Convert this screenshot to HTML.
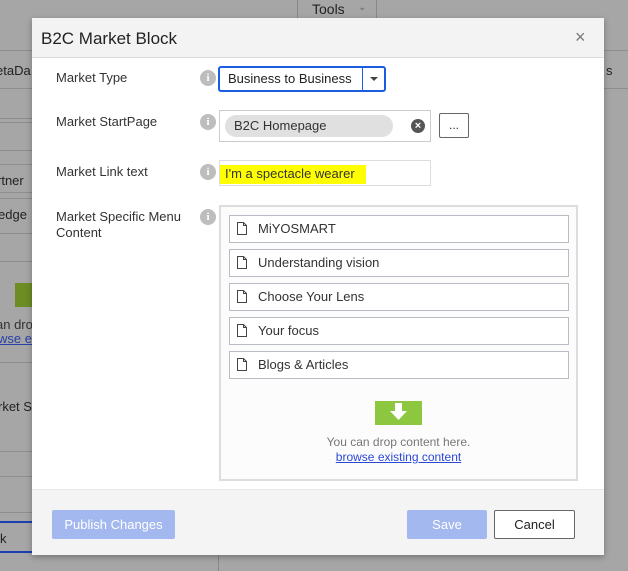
<!DOCTYPE html>
<html><head><style>
*{margin:0;padding:0;box-sizing:border-box}
body{width:628px;height:571px;background:#a6a6a6;position:relative;overflow:hidden;font-family:"Liberation Sans",sans-serif;font-size:13px;color:#333}
.a{position:absolute}
.ln{position:absolute;left:0;width:40px;height:1px;background:#8e8e8e}
.bt{color:#222;font-size:13px;position:absolute;left:0;white-space:nowrap}
.lbl{position:absolute;left:56px;font-size:13px;color:#333;line-height:16px}
.inf{position:absolute;left:200px;width:16px;height:16px;border-radius:50%;background:#bdbdbd;color:#fff;font-weight:bold;font-size:11px;text-align:center;line-height:16px;font-family:"Liberation Serif",serif}
.item{position:absolute;left:229px;width:340px;height:28px;border:1px solid #b9bcc4;background:#fff;font-size:13px;line-height:26px;padding-left:28px;color:#333}
.item svg{position:absolute;left:7px;top:6px}
</style></head><body>
<div class="a" style="left:297px;top:0;width:80px;height:18px;border-left:1px solid #888;border-right:1px solid #888"></div>
<div class="a" style="left:312px;top:1px;font-size:14px;color:#222">Tools</div>
<div class="a" style="left:358px;top:2px;font-size:10px;color:#666">&#8964;</div>
<div class="ln" style="top:50px;width:628px"></div>
<div class="ln" style="top:88px;width:628px"></div>
<div class="bt" style="top:63px;left:-4px">etaDa</div>
<div class="bt" style="top:63px;left:606px">s</div>
<div class="ln" style="top:118px"></div><div class="ln" style="top:122px"></div>
<div class="ln" style="top:150px"></div><div class="ln" style="top:164px"></div>
<div class="bt" style="top:173px;left:-3px">rtner</div>
<div class="ln" style="top:192px"></div><div class="ln" style="top:198px"></div>
<div class="bt" style="top:207px;left:-2px">edge</div>
<div class="ln" style="top:233px"></div><div class="ln" style="top:261px"></div>
<div class="a" style="left:15px;top:283px;width:20px;height:24px;background:#6d8c24"></div>
<div class="bt" style="top:317px;left:-4px;color:#333">an dro</div>
<div class="bt" style="top:331px;left:-2px;color:#2a3fa8;text-decoration:underline">wse exi</div>
<div class="ln" style="top:362px"></div>
<div class="bt" style="top:399px;left:-2px">rket S</div>
<div class="ln" style="top:451px"></div><div class="ln" style="top:476px"></div><div class="ln" style="top:512px"></div>
<div class="a" style="left:0;top:521px;width:40px;height:2px;background:#1d3fb0"></div>
<div class="bt" style="top:531px;left:0">k</div>
<div class="a" style="left:0;top:551px;width:40px;height:2px;background:#1d3fb0"></div>
<div class="a" style="left:218px;top:555px;width:1px;height:16px;background:#888"></div>

<div class="a" style="left:32px;top:18px;width:572px;height:537px;background:#fff;box-shadow:0 2px 6px rgba(0,0,0,.3)">
 <div class="a" style="left:0;top:0;width:572px;height:40px;background:#f3f3f3;border-bottom:1px solid #dcdcdc"></div>
 <div class="a" style="left:9px;top:11px;font-size:17px;color:#222">B2C Market Block</div>
 <div class="a" style="left:543px;top:9px;font-size:18px;color:#777">×</div>
</div>
<div class="lbl" style="top:70px">Market Type</div>
<div class="lbl" style="top:114px">Market StartPage</div>
<div class="lbl" style="top:164px">Market Link text</div>
<div class="lbl" style="top:209px">Market Specific Menu<br>Content</div>
<div class="inf" style="top:70px">i</div>
<div class="inf" style="top:114px">i</div>
<div class="inf" style="top:164px">i</div>
<div class="inf" style="top:209px">i</div>

<div class="a" style="left:218px;top:66px;width:168px;height:26px;border:2px solid #1b5de0;border-radius:3px"></div>
<div class="a" style="left:228px;top:71px;font-size:13px;color:#222">Business to Business</div>
<div class="a" style="left:362px;top:68px;width:1px;height:22px;background:#1b5de0"></div>
<div class="a" style="left:370px;top:77px;width:0;height:0;border-left:4px solid transparent;border-right:4px solid transparent;border-top:4px solid #444"></div>

<div class="a" style="left:219px;top:110px;width:212px;height:32px;border:1px solid #ccc"></div>
<div class="a" style="left:225px;top:115px;width:168px;height:22px;background:#e0e0e0;border-radius:11px"></div>
<div class="a" style="left:234px;top:118px;font-size:13px;color:#333">B2C Homepage</div>
<div class="a" style="left:411px;top:119px;width:14px;height:14px;border-radius:50%;background:#555;color:#fff;font-size:11px;line-height:14px;text-align:center;font-weight:bold">×</div>
<div class="a" style="left:439px;top:113px;width:30px;height:25px;border:1px solid #666;border-radius:2px;text-align:center;line-height:22px;font-size:12px">...</div>

<div class="a" style="left:219px;top:160px;width:212px;height:26px;border:1px solid #ddd"></div>
<div class="a" style="left:220px;top:165px;width:146px;height:19px;background:#ffff00"></div>
<div class="a" style="left:225px;top:166px;font-size:13px;color:#333">I'm a spectacle wearer</div>

<div class="a" style="left:219px;top:205px;width:359px;height:276px;border:2px solid #ddd;background:#fcfcfc"></div>
<div class="item" style="top:215px"><svg width="10" height="13" viewBox="0 0 10 13"><path d="M.5 .5H6.5L9.5 3.5V12.5H.5Z M6.5 .5V3.5H9.5" fill="none" stroke="#444"/></svg>MiYOSMART</div>
<div class="item" style="top:249px"><svg width="10" height="13" viewBox="0 0 10 13"><path d="M.5 .5H6.5L9.5 3.5V12.5H.5Z M6.5 .5V3.5H9.5" fill="none" stroke="#444"/></svg>Understanding vision</div>
<div class="item" style="top:283px"><svg width="10" height="13" viewBox="0 0 10 13"><path d="M.5 .5H6.5L9.5 3.5V12.5H.5Z M6.5 .5V3.5H9.5" fill="none" stroke="#444"/></svg>Choose Your Lens</div>
<div class="item" style="top:317px"><svg width="10" height="13" viewBox="0 0 10 13"><path d="M.5 .5H6.5L9.5 3.5V12.5H.5Z M6.5 .5V3.5H9.5" fill="none" stroke="#444"/></svg>Your focus</div>
<div class="item" style="top:351px"><svg width="10" height="13" viewBox="0 0 10 13"><path d="M.5 .5H6.5L9.5 3.5V12.5H.5Z M6.5 .5V3.5H9.5" fill="none" stroke="#444"/></svg>Blogs &amp; Articles</div>
<div class="a" style="left:375px;top:401px;width:47px;height:24px;background:#8dc63f"><svg width="47" height="24" viewBox="0 0 47 24"><path d="M20 2H27V10H32L23.5 19L15 10H20Z" fill="#fff"/></svg></div>
<div class="a" style="left:300px;top:435px;width:197px;text-align:center;font-size:12px;color:#777;line-height:15px">You can drop content here.<br><span style="color:#2b48d6;text-decoration:underline">browse existing content</span></div>

<div class="a" style="left:32px;top:489px;width:572px;height:66px;background:#f4f4f4;border-top:1px solid #e6e6e6"></div>
<div class="a" style="left:52px;top:510px;width:123px;height:29px;background:#a3b8ef;color:#fff;font-size:13px;text-align:center;line-height:29px;border-radius:2px">Publish Changes</div>
<div class="a" style="left:407px;top:510px;width:80px;height:29px;background:#a3b8ef;color:#fff;font-size:13px;text-align:center;line-height:29px;border-radius:2px">Save</div>
<div class="a" style="left:494px;top:510px;width:81px;height:29px;background:#fff;border:1px solid #666;color:#222;font-size:13px;text-align:center;line-height:27px;border-radius:2px">Cancel</div>
</body></html>
